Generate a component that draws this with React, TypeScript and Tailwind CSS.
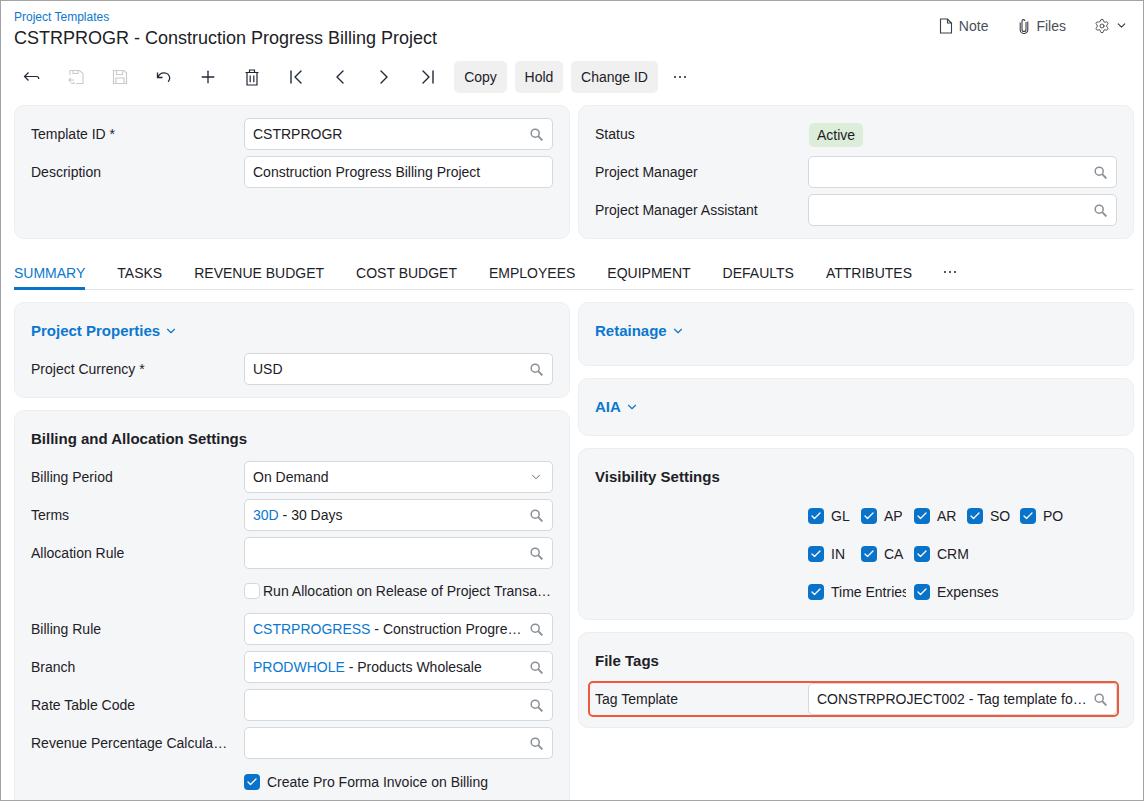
import React from 'react';
import { ChevronDown, Settings, Plus, ChevronLeft, ChevronRight, ChevronFirst, ChevronLast, Check } from 'lucide-react';

const BLUE = 'text-[#0b78d0]';

const IconBack = () => (
  <svg width="18" height="18" viewBox="0 0 18 18" fill="none" stroke="#1f2937" strokeWidth="1.2">
    <path d="M1.5 8.5h12c1.5 0 2.3 1 2.3 2.6M5.5 4.5l-4 4 4 4" />
  </svg>
);

const IconSaveBack = () => (
  <svg width="16" height="16" viewBox="0 0 16 16" fill="none" stroke="#c9cbcf" strokeWidth="1.1">
    <path d="M2 6V1.5h9.5L15 4.5v10H8M5 1.5v3h5v-3M1 11h5M3 9 1 11l2 2M6 13v1.5H3" />
  </svg>
);

const IconSave = () => (
  <svg width="16" height="16" viewBox="0 0 16 16" fill="none" stroke="#c9cbcf" strokeWidth="1.2">
    <path d="M1.5 1.5h10.5l2.5 2.5v10.5h-13zM4.5 1.5v4h6v-4M4 14.5V9h8v5.5" />
  </svg>
);

const IconUndo = () => (
  <svg width="18" height="18" viewBox="0 0 18 18" fill="none" stroke="#1f2937" strokeWidth="1.3">
    <path d="M2.5 4.5v5h5M2.8 9.3C4 6.5 6.2 4.8 9 4.8c3.4 0 5.7 2.4 5.7 5.2 0 1.6-.6 2.8-1.6 3.8" />
  </svg>
);

const IconTrash = () => (
  <svg width="14" height="17" viewBox="0 0 14 17" fill="none" stroke="#1f2937" strokeWidth="1.2">
    <path d="M.5 3.5h13M4.5 3.5v-2.5h5v2.5M2 3.5v12.5h10V3.5M5.2 6.5v6.8M8.8 6.5v6.8" />
  </svg>
);

const IconNote = () => (
  <svg width="14" height="16" viewBox="0 0 14 16" fill="none" stroke="#3a3f45" strokeWidth="1.1">
    <path d="M1.5 1h7l4 4v10h-11zM8.5 1v4h4" />
  </svg>
);

const IconClip = () => (
  <svg width="10" height="16" viewBox="0 0 10 16" fill="none" stroke="#3a3f45" strokeWidth="1.1">
    <path d="M7 4v7.5a2 2 0 0 1-4 0V3a1.4 1.4 0 0 1 2.8 0M1.2 4.5v7.2a3.8 3.8 0 0 0 7.6 0V3.5" />
  </svg>
);

const IconSearch = () => (
  <svg width="13" height="13" viewBox="0 0 13 13" fill="none" stroke="#8a8f96" strokeWidth="1.5" className="ml-[3px] shrink-0">
    <circle cx="5.2" cy="5.2" r="4" />
    <path d="M8.2 8.2 12.4 12.4" strokeWidth="1.9" />
  </svg>
);

const Dots = () => (
  <span className="flex items-center gap-[3px]">
    <span className="w-[2px] h-[2px] rounded-full bg-[#222]" />
    <span className="w-[2px] h-[2px] rounded-full bg-[#222]" />
    <span className="w-[2px] h-[2px] rounded-full bg-[#222]" />
  </span>
);

type FieldProps = { code?: string; text?: string; select?: boolean; plain?: boolean };

const Field = ({ code, text, select, plain }: FieldProps) => (
  <div className="w-[309px] h-8 shrink-0 flex items-center pl-2 pr-[9px] bg-white border border-[#d5d8dc] rounded-[5px]">
    <span className="flex-1 min-w-0 truncate">
      {code && <span className={BLUE}>{code}</span>}
      {text}
    </span>
    {select ? <ChevronDown size={14} strokeWidth={1.5} className="ml-2 shrink-0 text-[#555]" /> : !plain && <IconSearch />}
  </div>
);

const Label = ({ children }: { children: React.ReactNode }) => (
  <div className="w-[213px] shrink-0 pr-4 truncate">{children}</div>
);

const Row = ({ label, ...rest }: { label: string } & FieldProps) => (
  <div className="h-[38px] flex items-center">
    <Label>{label}</Label>
    <Field {...rest} />
  </div>
);

const Box = ({ checked }: { checked: boolean }) => (
  <span
    className={
      checked
        ? 'w-4 h-4 shrink-0 rounded-[4px] bg-[#0873c8] flex items-center justify-center'
        : 'w-4 h-4 shrink-0 rounded-[4px] bg-white border border-[#d5d8dc]'
    }
  >
    {checked && <Check size={12} strokeWidth={2.6} className="text-white" />}
  </span>
);

const Panel = ({ className, children }: { className: string; children?: React.ReactNode }) => (
  <section className={`bg-[#f5f6f8] border border-[#eceef1] rounded-[10px] px-4 pt-4 ${className}`}>{children}</section>
);

const Heading = ({ children }: { children: React.ReactNode }) => (
  <div className="h-6 flex items-center font-bold text-[15px]">{children}</div>
);

const Collapsible = ({ children }: { children: React.ReactNode }) => (
  <div className={`h-6 flex items-center font-bold text-[15px] ${BLUE}`}>
    {children}
    <ChevronDown size={14} strokeWidth={2} className="ml-[4px]" />
  </div>
);

const VisItem = ({ label, wide }: { label: string; wide?: boolean }) => (
  <div className={wide ? 'w-[106px] flex items-center' : 'w-[53px] flex items-center'}>
    <Box checked />
    <span className={wide ? 'ml-[7px] w-[75px] overflow-hidden whitespace-nowrap' : 'ml-[7px] whitespace-nowrap'}>{label}</span>
  </div>
);

const tabs = ['TASKS', 'REVENUE BUDGET', 'COST BUDGET', 'EMPLOYEES', 'EQUIPMENT', 'DEFAULTS', 'ATTRIBUTES'];

export default function App() {
  return (
    <div className="w-[1144px] h-[801px] overflow-hidden bg-white border border-[#a3a3a3] pl-[13px] pr-[9px] text-[14px] leading-5 text-[#1d2126] font-['Liberation_Sans',Arial,sans-serif]">
      {/* Header */}
      <header className="h-[49px] flex justify-between">
        <div className="pt-[9px]">
          <div className={`text-[12px] leading-[15px] ${BLUE}`}>Project Templates</div>
          <div className="text-[18px] leading-[24px] mt-px">CSTRPROGR - Construction Progress Billing Project</div>
        </div>
        <div className="flex items-center h-[50px] text-[#4a4f55] pr-[6px] pb-[1px]">
          <IconNote />
          <span className="ml-[6px]">Note</span>
          <span className="ml-[31px]"><IconClip /></span>
          <span className="ml-[7px]">Files</span>
          <Settings size={16} strokeWidth={1.3} className="ml-[28px] text-[#33383e]" />
          <ChevronDown size={13} strokeWidth={2} className="ml-[5px] text-[#33383e]" />
        </div>
      </header>

      {/* Toolbar */}
      <div className="h-[54px] mb-px flex items-center">
        <div className="flex items-center -ml-[4px]">
          <span className="w-11 flex justify-center"><IconBack /></span>
          <span className="w-11 flex justify-center"><IconSaveBack /></span>
          <span className="w-11 flex justify-center"><IconSave /></span>
          <span className="w-11 flex justify-center"><IconUndo /></span>
          <span className="w-11 flex justify-center"><Plus size={20} strokeWidth={1.6} className="text-[#1f2937]" /></span>
          <span className="w-11 flex justify-center"><IconTrash /></span>
          <span className="w-11 flex justify-center"><ChevronFirst size={24} strokeWidth={1.4} className="text-[#1f2937]" /></span>
          <span className="w-11 flex justify-center"><ChevronLeft size={24} strokeWidth={1.4} className="text-[#1f2937]" /></span>
          <span className="w-11 flex justify-center"><ChevronRight size={24} strokeWidth={1.4} className="text-[#1f2937]" /></span>
          <span className="w-11 flex justify-center"><ChevronLast size={24} strokeWidth={1.4} className="text-[#1f2937]" /></span>
        </div>
        <div className="flex items-center gap-2 ml-[4px]">
          <span className="h-8 w-[53px] flex items-center justify-center rounded-[5px] bg-[#f0f0f0]">Copy</span>
          <span className="h-8 w-[48px] flex items-center justify-center rounded-[5px] bg-[#f0f0f0]">Hold</span>
          <span className="h-8 w-[87px] flex items-center justify-center rounded-[5px] bg-[#f0f0f0]">Change ID</span>
        </div>
        <span className="ml-[16px]"><Dots /></span>
      </div>

      {/* Summary panels */}
      <div className="grid grid-cols-[556px_556px] gap-2">
        <Panel className="h-[134px]">
          <div className="-mt-[7px]">
            <Row label="Template ID *" text="CSTRPROGR" />
            <Row label="Description" text="Construction Progress Billing Project" plain />
          </div>
        </Panel>
        <Panel className="h-[134px]">
          <div className="-mt-[7px]">
            <div className="h-[38px] flex items-center">
              <Label>Status</Label>
              <span className="h-6 px-2 ml-px mt-[2px] flex items-center rounded-[5px] bg-[#dcedd9]">Active</span>
            </div>
            <Row label="Project Manager" />
            <Row label="Project Manager Assistant" />
          </div>
        </Panel>
      </div>

      {/* Tabs */}
      <nav className="h-[39px] mt-[12px] mb-[12px] flex items-stretch gap-8 border-b border-[#e1e3e6]">
        <span className="pt-[12px] border-b-[3px] -mb-px border-[#0873c8] text-[#0b78d0]">SUMMARY</span>
        {tabs.map((t) => (
          <span key={t} className="pt-[12px]">{t}</span>
        ))}
        <span className="flex items-center pt-[4px]"><Dots /></span>
      </nav>

      {/* Two columns */}
      <div className="grid grid-cols-[556px_556px] gap-2">
        <div className="flex flex-col gap-3">
          <Panel className="pb-[9px]">
            <div className="mb-[7px]"><Collapsible>Project Properties</Collapsible></div>
            <Row label="Project Currency *" text="USD" />
          </Panel>
          <Panel className="pb-[9px]">
            <div className="mb-[7px]"><Heading>Billing and Allocation Settings</Heading></div>
            <Row label="Billing Period" text="On Demand" select />
            <Row label="Terms" code="30D" text=" - 30 Days" />
            <Row label="Allocation Rule" />
            <div className="h-[38px] flex items-center pl-[213px] w-[522px]">
              <Box checked={false} />
              <span className="ml-[3px] truncate">Run Allocation on Release of Project Transactions</span>
            </div>
            <Row label="Billing Rule" code="CSTRPROGRESS" text=" - Construction Progress Billing" />
            <Row label="Branch" code="PRODWHOLE" text=" - Products Wholesale" />
            <Row label="Rate Table Code" />
            <Row label="Revenue Percentage Calculation" />
            <div className="h-[38px] flex items-center pl-[213px] pt-px">
              <Box checked />
              <span className="ml-[7px] truncate">Create Pro Forma Invoice on Billing</span>
            </div>
          </Panel>
        </div>
        <div className="flex flex-col gap-3">
          <Panel className="pb-[22px]">
            <Collapsible>Retainage</Collapsible>
          </Panel>
          <Panel className="pb-4">
            <Collapsible>AIA</Collapsible>
          </Panel>
          <Panel className="pb-2">
            <div className="mb-2"><Heading>Visibility Settings</Heading></div>
            <div className="pl-[213px]">
              <div className="h-[38px] flex items-center">
                <VisItem label="GL" />
                <VisItem label="AP" />
                <VisItem label="AR" />
                <VisItem label="SO" />
                <VisItem label="PO" />
              </div>
              <div className="h-[38px] flex items-center">
                <VisItem label="IN" />
                <VisItem label="CA" />
                <VisItem label="CRM" />
              </div>
              <div className="h-[38px] flex items-center">
                <VisItem label="Time Entries" wide />
                <VisItem label="Expenses" />
              </div>
            </div>
          </Panel>
          <Panel className="pb-[9px]">
            <div className="mb-[7px]"><Heading>File Tags</Heading></div>
            <div className="relative">
              <Row label="Tag Template" text="CONSTRPROJECT002 - Tag template for construction projects" />
              <div className="absolute -left-[7px] -right-[2px] top-px bottom-px border-2 border-[#f0593a] rounded-[5px]" />
            </div>
          </Panel>
        </div>
      </div>
    </div>
  );
}
